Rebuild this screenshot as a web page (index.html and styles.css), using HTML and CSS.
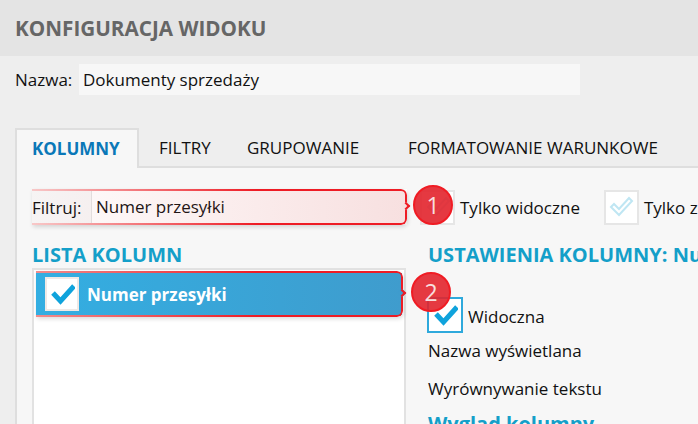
FILE: index.html
```html
<!DOCTYPE html>
<html lang="pl">
<head>
<meta charset="utf-8">
<title>Konfiguracja widoku</title>
<link rel="stylesheet" href="styles.css">
</head>
<body>
<header class="title-bar"><h1 class="title">KONFIGURACJA WIDOKU</h1></header>
<div class="name-row">
  <span class="name-label">Nazwa:</span>
  <div class="name-input">Dokumenty sprzedaży</div>
</div>
<nav class="tabs">
  <div class="tab tab-active">KOLUMNY</div>
  <div class="tab tab-filtry">FILTRY</div>
  <div class="tab tab-grup">GRUPOWANIE</div>
  <div class="tab tab-form">FORMATOWANIE WARUNKOWE</div>
</nav>
<main class="panel">
  <div class="filter-row">
    <span class="filter-label">Filtruj:</span>
    <div class="filter-input">Numer przesyłki</div>
    <div class="check check-muted filter-check">
      <svg class="tick" viewBox="0 0 26 26"><path d="M3 13l3-3 5 5L21 4l3 3-13 14z" fill="#fff" stroke="#bfe6f3" stroke-width="2"/></svg>
    </div>
    <span class="check-text">Tylko widoczne</span>
    <div class="check check-light">
      <svg class="tick" viewBox="0 0 26 26"><path d="M3 13l3-3 5 5L21 4l3 3-13 14z" fill="#fff" stroke="#bfe6f3" stroke-width="2"/></svg>
    </div>
    <span class="check-text">Tylko zaznaczone</span>
  </div>
  <div class="columns">
    <section class="list-col">
      <h2 class="heading">LISTA KOLUMN</h2>
      <div class="list-box">
        <div class="list-item">
          <div class="check check-white">
            <svg class="tick" viewBox="0 0 26 26"><path d="M4 12l7.500 8L25 5" fill="none" stroke="#0fa3dc" stroke-width="5"/></svg>
          </div>
          <span class="item-text">Numer przesyłki</span>
        </div>
      </div>
    </section>
    <section class="settings-col">
      <h2 class="heading">USTAWIENIA KOLUMNY: Numer przesyłki</h2>
      <div class="visible-row">
        <div class="check check-blue">
          <svg class="tick" viewBox="0 0 26 26"><path d="M4 12l7.500 8L25 5" fill="none" stroke="#0fa3dc" stroke-width="5"/></svg>
        </div>
        <span class="plain">Widoczna</span>
      </div>
      <div class="plain row-name">Nazwa wyświetlana</div>
      <div class="plain row-align">Wyrównywanie tekstu</div>
      <h3 class="subheading">Wygląd kolumny</h3>
    </section>
  </div>
</main>
<div class="hl hl-one"></div>
<div class="hl hl-two"></div>
<div class="notch notch-one"></div>
<div class="notch notch-two"></div>
<div class="badge badge-one">1</div>
<div class="badge badge-two">2</div>
</body>
</html>
```
FILE: styles.css
```css
* { box-sizing: border-box; }
html, body { margin: 0; height: 100%; }
body {
  position: relative;
  width: 698px;
  height: 424px;
  overflow: hidden;
  background: #eeeeee;
  font-family: "Open Sans", "Noto Sans", sans-serif;
  font-size: 17px;
  color: #111;
}
.title-bar {
  height: 56px;
  background: #e4e4e4;
  padding-left: 15px;
  display: flex;
  align-items: center;
}
.title {
  margin: 0;
  font-size: 20.7px;
  font-weight: 700;
  color: #666;
}
.name-row {
  display: flex;
  align-items: center;
  margin-top: 8px;
  padding-left: 15px;
  height: 31px;
}
.name-label { width: 64px; }
.name-input {
  width: 501px;
  height: 31px;
  line-height: 31px;
  padding-left: 4px;
  background: #f7f7f7;
}
.tabs {
  display: flex;
  margin: 33px 0 0 15px;
  height: 40px;
  border-bottom: 2px solid #dedede;
}
.tab {
  height: 40px;
  line-height: 40px;
  flex: none;
}
.tab-active {
  width: 124px;
  padding-left: 15px;
  font-weight: 700;
  color: #0a78b8;
  background: #f7f7f7;
  border: 2px solid #dedede;
  border-bottom: 0;
  line-height: 38px;
}
.tab-filtry { margin-left: 20px; width: 88px; }
.tab-grup { width: 161px; }
.panel {
  margin-left: 15px;
  height: 256px;
  padding: 21px 0 0 15px;
  background: #f7f7f7;
  border-left: 2px solid #dedede;
  overflow: hidden;
}
.filter-row {
  display: flex;
  align-items: center;
  height: 36px;
}
.filter-label { width: 59px; flex: none; }
.filter-input {
  width: 316px;
  height: 36px;
  line-height: 36px;
  padding-left: 4px;
  background: #fff;
  border-left: 1px solid #e3e3e3;
  flex: none;
}
.check {
  width: 35px;
  height: 35px;
  flex: none;
  display: flex;
  align-items: center;
  justify-content: center;
}
.tick { width: 26px; height: 26px; display: block; }
.filter-check { margin-left: 13px; background: #fff; border: 2px solid #e6e6e6; }
.check-text { margin-left: 5px; white-space: nowrap; flex: none; }
.check-light { margin-left: 24px; background: #fff; border: 2px solid #e6e6e6; }
.columns { display: flex; margin-top: 16px; }
.list-col { width: 396px; flex: none; }
.heading {
  margin: 0;
  font-size: 20px;
  line-height: 27px;
  font-weight: 700;
  color: #149fc9;
  white-space: nowrap;
}
.list-box {
  width: 374px;
  height: 200px;
  background: #fff;
  border: 2px solid #e2e2e2;
  padding: 3px 2px;
}
.list-item {
  display: flex;
  align-items: center;
  height: 42px;
  padding-left: 9px;
  background: linear-gradient(90deg, #33aee2, #3f9ccd);
}
.check-white { background: #fff; border: 2px solid #efe9e6; width: 34px; height: 34px; }
.item-text { margin-left: 8px; color: #fff; font-weight: 700; }
.settings-col { flex: none; width: 280px; }
.visible-row { display: flex; align-items: center; margin-top: 29px; }
.check-blue { background: #fff; border: 2px solid #2ea9dc; width: 36px; height: 36px; margin-left: -1px; }
.plain { white-space: nowrap; }
.visible-row .plain { margin-left: 5px; padding-top: 2px; }
.row-name { margin-top: 6px; line-height: 24px; }
.row-align { margin-top: 14px; line-height: 24px; }
.subheading {
  margin: 10px 0 0;
  font-size: 20px;
  line-height: 26px;
  font-weight: 700;
  color: #149fc9;
  white-space: nowrap;
}
.hl {
  position: absolute;
  border-radius: 0 6px 6px 0;
  box-shadow: 1px 2px 4px rgba(0, 0, 0, .14);
}
.hl::before {
  content: "";
  position: absolute;
  inset: 0;
  padding: 2px 2px 2px 0;
  border-radius: inherit;
  -webkit-mask: linear-gradient(#000 0 0) content-box, linear-gradient(#000 0 0);
  -webkit-mask-composite: xor;
  mask-composite: exclude;
}
.hl-one {
  top: 189px;
  left: 32px;
  width: 375px;
  height: 36px;
  background: linear-gradient(90deg, rgba(220, 90, 90, .02), rgba(210, 70, 70, .17));
}
.hl-one::before { background: linear-gradient(90deg, #f8c8c8, #ee1c25 60%); }
.hl-two {
  top: 271px;
  left: 36px;
  width: 367px;
  height: 46px;
}
.hl-two::before { background: linear-gradient(90deg, #f08c8c, #ee1c25 60%); }
.notch {
  position: absolute;
  width: 6px;
  height: 6px;
  border-top: 2px solid #ee1c25;
  border-right: 2px solid #ee1c25;
  transform: rotate(45deg);
}
.notch-one { left: 403px; top: 203px; background: #f5dede; }
.notch-two { left: 399px; top: 290px; background: #3f9ccd; }
.badge {
  position: absolute;
  width: 40px;
  height: 40px;
  border-radius: 50%;
  background: rgba(226, 36, 44, .9);
  border: 2px solid #f01c24;
  color: #f8dede;
  font-size: 23px;
  line-height: 36px;
  text-align: center;
}
.badge-one { left: 413px; top: 185px; }
.badge-two { left: 411px; top: 272px; }
```
